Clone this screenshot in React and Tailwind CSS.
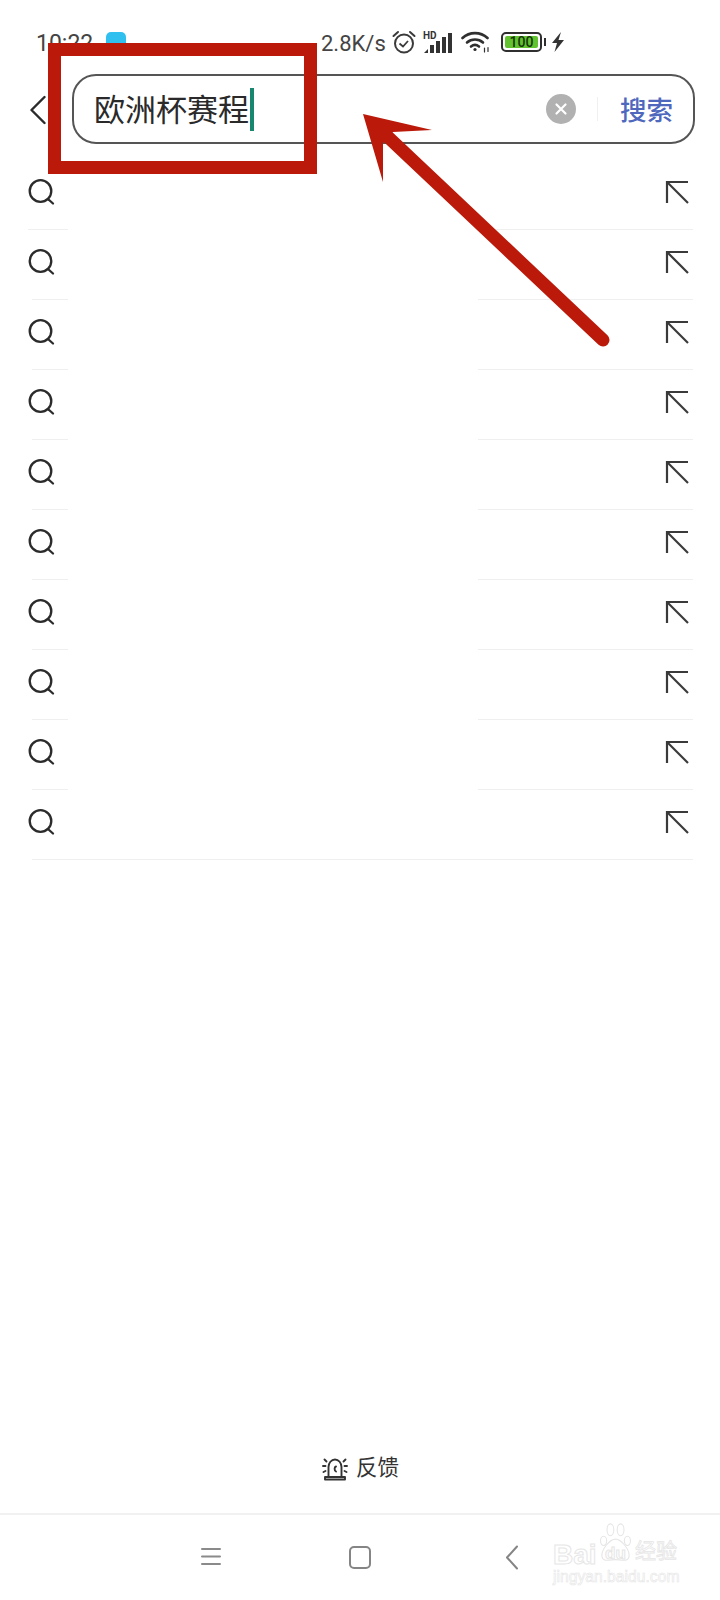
const rows = [0, 1, 2, 3, 4, 5, 6, 7, 8, 9];

function SearchIcon() {
  return (
    <svg width="28" height="28" viewBox="0 0 28 28" fill="none" stroke="#2b2b2b" strokeWidth="2.3" strokeLinecap="round">
      <circle cx="13.5" cy="13" r="10.8" />
      <path d="M21.5 21.5 L26 25.5" />
    </svg>
  );
}

function FillIcon() {
  return (
    <svg width="24" height="24" viewBox="0 0 24 24" fill="none" stroke="#3a3a3a" strokeWidth="2.2" strokeLinecap="butt">
      <path d="M2 23 V2 H23" />
      <path d="M2.5 2.5 L23 23" />
    </svg>
  );
}

function Alarm() {
  return (
    <svg width="24" height="24" viewBox="0 0 24 24" fill="none" stroke="#3a3a3a" strokeWidth="2">
      <circle cx="12" cy="13.5" r="9" />
      <path d="M7.5 13.5 L11 16.5 L16 11" strokeWidth="1.8" />
      <path d="M1.5 6 L6 2 M22.5 6 L18 2" strokeLinecap="round" />
    </svg>
  );
}

function Signal() {
  return (
    <div className="relative w-[30px] h-[21px]">
      <span className="absolute left-0 top-[-2px] text-[10px] leading-[11px] font-bold text-[#333]">HD</span>
      <svg className="absolute inset-0" width="30" height="21" viewBox="0 0 30 21" fill="#333">
        <path d="M1 21 L5 17 V21 Z" />
        <rect x="7" y="13" width="4" height="8" />
        <rect x="13" y="9" width="4" height="12" />
        <rect x="19" y="5" width="4" height="16" />
        <rect x="25" y="1" width="4" height="20" />
      </svg>
    </div>
  );
}

function Wifi() {
  return (
    <svg width="30" height="22" viewBox="0 0 30 22" fill="none" stroke="#2f2f2f" strokeWidth="2.6" strokeLinecap="round">
      <path d="M1.5 7 C8.5 0.5 19.5 0.5 26.5 7" />
      <path d="M6 11.5 C10.5 7.5 17.5 7.5 22 11.5" />
      <path d="M10 15.5 C12.5 13.5 15.5 13.5 18 15.5" />
      <circle cx="14" cy="18.5" r="1.6" fill="#2f2f2f" stroke="none" />
      <path d="M23.5 17 V21 M27 16.5 V20.5" strokeWidth="1.2" />
    </svg>
  );
}

function Battery() {
  return (
    <div className="flex items-center gap-[2px]">
      <div className="w-[41px] h-[20px] border-2 border-[#2f2f2f] rounded-[5px] p-[2px] flex">
        <div className="flex-1 bg-[#63c22f] rounded-[2px] flex items-center justify-center text-[14px] leading-none font-medium text-[#16360c]">100</div>
      </div>
      <div className="w-[2px] h-[8px] bg-[#2f2f2f]" />
    </div>
  );
}

function Bolt() {
  return (
    <svg width="14" height="20" viewBox="0 0 14 20" fill="#333">
      <path d="M10 0 L1 11 H6 L3.5 20 L13 8 H7.5 Z" />
    </svg>
  );
}

function Siren() {
  return (
    <svg width="26" height="25" viewBox="0 0 26 25" fill="none" stroke="#333" strokeWidth="1.9" strokeLinecap="round" strokeLinejoin="round">
      <path d="M6.5 21 V11 C6.5 7 9.3 3.5 13 3.5 C16.7 3.5 19.5 7 19.5 11 V21" />
      <path d="M3 23.5 V21 H23 V23.5 Z" />
      <path d="M14 10.5 C12.3 11 12 14.5 14 15.5" />
      <path d="M1 10 H3.5 M22.5 10 H25 M2.5 3.5 L4.5 5.5 M23.5 3.5 L21.5 5.5 M1.5 16 L3.5 15 M24.5 16 L22.5 15" />
    </svg>
  );
}

function Row({ index }) {
  const last = index === rows.length - 1;
  return (
    <div className="h-[70px] flex flex-col">
      <div className="h-[69px] flex items-center justify-between pl-[27px] pr-[31px] pb-[5px]">
        <SearchIcon />
        <FillIcon />
      </div>
      {last ? (
        <div className="h-px ml-[32px] mr-[27px] bg-[#efefef]" />
      ) : (
        <div className={`h-px mr-[27px] flex justify-between ${index === 0 ? "ml-[28px]" : "ml-[32px]"}`}>
          <div className={`bg-[#efefef] ${index === 0 ? "w-[40px]" : "w-[36px]"}`} />
          <div className="w-[215px] bg-[#efefef]" />
        </div>
      )}
    </div>
  );
}

function Watermark() {
  return (
    <div className="absolute left-[553px] top-[1523px] w-[128px] h-[62px] text-transparent [-webkit-text-stroke:1px_#e6e6e6]">
      <div className="absolute left-0 top-[16px] text-[28px] leading-[32px] font-bold font-['Liberation_Sans',sans-serif]">Bai</div>
      <svg className="absolute left-[44px] top-0" width="37" height="40" viewBox="0 0 38 47" fill="white" stroke="#e6e6e6" strokeWidth="1.3">
        <ellipse cx="5" cy="21" rx="3.6" ry="5.5" />
        <ellipse cx="13" cy="8" rx="4" ry="7" />
        <ellipse cx="25" cy="8" rx="4" ry="7" />
        <ellipse cx="33" cy="21" rx="3.6" ry="5.5" />
        <path d="M19 19 C26 19 35 31 35 38 C35 47 25 43 19 43 C13 43 3 47 3 38 C3 31 12 19 19 19 Z" />
      </svg>
      <div className="absolute left-[52px] top-[22px] text-[17px] leading-[18px] font-bold font-['Liberation_Sans',sans-serif]">du</div>
      <div className="absolute left-[82px] top-[16px] text-[21px] leading-[24px] whitespace-nowrap [-webkit-text-stroke:0.8px_#e6e6e6]">经验</div>
      <div className="absolute left-0 top-[45px] text-[15.7px] leading-[18px] whitespace-nowrap font-['Liberation_Sans',sans-serif] [-webkit-text-stroke:0.6px_#e6e6e6]">jingyan.baidu.com</div>
    </div>
  );
}

export default function App() {
  return (
    <div className="relative w-[720px] h-[1600px] overflow-hidden bg-white flex flex-col font-['Roboto','Noto_Sans_CJK_SC',sans-serif] text-[#2f2f2f]">
      <div className="h-[74px] pt-[31px] pl-[36px] flex items-start shrink-0">
        <div className="flex items-center h-[22px]">
          <span className="w-[70px] pt-[3px] text-[23px] leading-[22px] text-[#444]">10:22</span>
          <span className="w-[20px] h-[20px] rounded-[5px] bg-[#2fc0f0]" />
        </div>
        <div className="ml-[195px] flex items-center h-[22px]">
          <span className="w-[71px] pt-[3px] text-[22px] leading-[22px] text-[#444]">2.8K/s</span>
          <Alarm />
          <div className="ml-[7px]"><Signal /></div>
          <div className="ml-[8px]"><Wifi /></div>
          <div className="ml-[10px]"><Battery /></div>
          <div className="ml-[5px]"><Bolt /></div>
        </div>
      </div>

      <div className="h-[70px] flex items-center pl-[30px] pr-[25px] shrink-0">
        <svg className="w-[42px] shrink-0 mt-[2px]" width="42" height="30" viewBox="0 0 42 30" fill="none" stroke="#2b2b2b" strokeWidth="2.4" strokeLinecap="round" strokeLinejoin="round">
          <path d="M14.5 2 L1.5 15 L14.5 28" />
        </svg>
        <div className="relative flex-1 h-[70px] border-2 border-[#555] rounded-[24px] flex items-center pl-[20px] pr-[20px]">
          <span className="pt-[3px] text-[31px] leading-[40px] text-[#2a2a2a] whitespace-nowrap">欧洲杯赛程</span>
          <span className="ml-[1px] w-[4px] h-[43px] bg-[#17876f]" />
          <div className="ml-auto w-[30px] h-[30px] rounded-full bg-[#b1b1b1] flex items-center justify-center">
            <svg width="14" height="14" viewBox="0 0 14 14" stroke="white" strokeWidth="2.2" strokeLinecap="round">
              <path d="M2.5 2.5 L11.5 11.5 M11.5 2.5 L2.5 11.5" />
            </svg>
          </div>
          <div className="ml-[21px] w-px h-[24px] bg-[#f0f0f0]" />
          <span className="ml-[22px] pt-[4px] text-[26.5px] leading-[34px] font-medium text-[#4f68bd] whitespace-nowrap">搜索</span>
        </div>
      </div>

      <div className="mt-[16px] flex flex-col shrink-0">
        {rows.map((i) => (
          <Row key={i} index={i} />
        ))}
      </div>

      <div className="flex-1 flex items-end justify-center pb-[31px]">
        <div className="flex items-center gap-[8px] pl-[1px]">
          <Siren />
          <span className="text-[21.5px] leading-[28px] text-[#333]">反馈</span>
        </div>
      </div>

      <div className="h-[87px] shrink-0 border-t-2 border-[#f1f1f1] flex items-start pt-[31px] pl-[201px]">
        <svg width="20" height="22" viewBox="0 0 20 22" stroke="#8a8a8a" strokeWidth="2" strokeLinecap="round">
          <path d="M1 3 H19 M1 10.5 H19 M1 18 H19" />
        </svg>
        <div className="ml-[128px] w-[22px] h-[23px] border-2 border-[#858585] rounded-[5px]" />
        <svg className="ml-[134px] -mt-[1px]" width="14" height="25" viewBox="0 0 14 25" fill="none" stroke="#858585" strokeWidth="2" strokeLinecap="round" strokeLinejoin="round">
          <path d="M12 1.5 L2 12.5 L12 23.5" />
        </svg>
      </div>

      <Watermark />

      <div className="absolute left-[48px] top-[43px] w-[269px] h-[131px] border-[13px] border-[#bb1a0a]" />
      <svg className="absolute left-0 top-0 pointer-events-none" width="720" height="400" viewBox="0 0 720 400">
        <path d="M603 340 L388 137" stroke="#bb1a0a" strokeWidth="13" strokeLinecap="round" fill="none" />
        <path d="M363 114 L432 130 L393 132 L383 143 L383 182 Z" fill="#bb1a0a" />
      </svg>
    </div>
  );
}
